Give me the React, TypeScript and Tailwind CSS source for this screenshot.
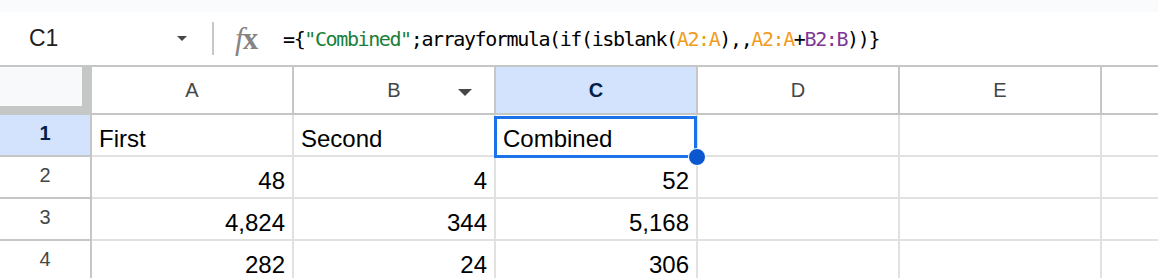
import React from "react";

const cols = ["A", "B", "C", "D", "E"];

const rows: { n: number; cells: (string | null)[]; num: boolean }[] = [
  { n: 1, cells: ["First", "Second", "Combined", null, null], num: false },
  { n: 2, cells: ["48", "4", "52", null, null], num: true },
  { n: 3, cells: ["4,824", "344", "5,168", null, null], num: true },
  { n: 4, cells: ["282", "24", "306", null, null], num: true },
];

function FormulaBar() {
  return (
    <div className="flex h-[55px] items-center border-b-2 border-[#c4c7c5] bg-white">
      <div className="flex w-[200px] items-center justify-between pl-[29px] pr-[13px]">
        <span className="text-[23px] text-[#1f1f1f]">C1</span>
        <svg width="10" height="5" viewBox="0 0 10 5">
          <polygon points="0,0 10,0 5,5" fill="#444746" />
        </svg>
      </div>
      <div className="ml-[12px] h-[33px] w-[2px] bg-[#c7c7c7]" />
      <div className="ml-[21px] flex w-[32px] items-baseline font-['Liberation_Serif',serif] text-[31px] leading-none text-[#858585]">
        <span className="italic">f</span>
        <span className="-ml-[1px] font-bold">x</span>
      </div>
      <div className="ml-[16px] whitespace-pre font-['DejaVu_Sans_Mono',monospace] text-[20px] tracking-[-1.4px] text-black">
        <span>={"{"}</span>
        <span className="text-[#188038]">"Combined"</span>
        <span>;arrayformula(if(isblank(</span>
        <span className="text-[#f29b20]">A2:A</span>
        <span>),,</span>
        <span className="text-[#f29b20]">A2:A</span>
        <span>+</span>
        <span className="text-[#7e3794]">B2:B</span>
        <span>)){"}"}</span>
      </div>
    </div>
  );
}

function HeaderRow() {
  return (
    <div className="flex h-[48px]">
      <div className="h-full w-[92px] shrink-0 border-b-2 border-r-2 border-[#c4c7c5] bg-[#c4c7c5]">
        <div className="h-[39px] w-[82px] bg-[#f8f9fa]" />
      </div>
      {cols.map((c) => {
        const active = c === "C";
        return (
          <div
            key={c}
            className={
              active
                ? "relative flex h-full w-[202px] shrink-0 items-center justify-center border-b-2 border-r-2 border-[#c4c7c5] bg-[#d3e3fd] text-[20px] font-bold text-[#041e49]"
                : "relative flex h-full w-[202px] shrink-0 items-center justify-center border-b-2 border-r-2 border-[#c4c7c5] bg-white text-[20px] text-[#444746]"
            }
          >
            {c}
            {c === "B" && (
              <svg className="absolute right-[22px] top-[22px]" width="14" height="7" viewBox="0 0 14 7">
                <polygon points="0,0 14,0 7,7" fill="#444746" />
              </svg>
            )}
          </div>
        );
      })}
      <div className="h-full flex-1 border-b-2 border-[#c4c7c5] bg-white" />
    </div>
  );
}

function BodyRow({ n, cells, num }: { n: number; cells: (string | null)[]; num: boolean }) {
  const first = n === 1;
  return (
    <div className="flex h-[42px]">
      <div
        className={
          first
            ? "flex h-full w-[92px] shrink-0 items-center justify-center border-b-2 border-r-2 border-[#c4c7c5] bg-[#d3e3fd] pb-[4px] text-[20px] font-bold text-[#041e49]"
            : "flex h-full w-[92px] shrink-0 items-center justify-center border-b-2 border-r-2 border-[#c4c7c5] bg-white pb-[4px] text-[20px] text-[#444746]"
        }
      >
        {n}
      </div>
      {cells.map((v, i) => (
        <div
          key={i}
          className={
            num
              ? "relative flex h-full w-[202px] shrink-0 items-end justify-end border-b-2 border-r-2 border-[#e1e1e1] px-[7px] pb-[4px] text-[24px] leading-[24px] text-black"
              : "relative flex h-full w-[202px] shrink-0 items-end justify-start border-b-2 border-r-2 border-[#e1e1e1] px-[7px] pb-[4px] text-[24px] leading-[24px] text-black"
          }
        >
          {v}
          {first && i === 2 && (
            <div className="absolute -left-[2px] top-[1px] z-10 h-[42px] w-[203px] border-[3px] border-[#1a73e8]">
              <div className="absolute left-[191px] top-[29px] h-[18px] w-[18px] rounded-full border border-white bg-[#0b57d0]" />
            </div>
          )}
        </div>
      ))}
      <div className="h-full flex-1 border-b-2 border-[#e1e1e1]" />
    </div>
  );
}

export default function App() {
  return (
    <div className="h-[278px] w-[1158px] overflow-hidden bg-white font-['Liberation_Sans',Arial,sans-serif]">
      <div className="h-[12px] bg-[#f9fbfd]" />
      <FormulaBar />
      <HeaderRow />
      {rows.map((r) => (
        <BodyRow key={r.n} {...r} />
      ))}
    </div>
  );
}
